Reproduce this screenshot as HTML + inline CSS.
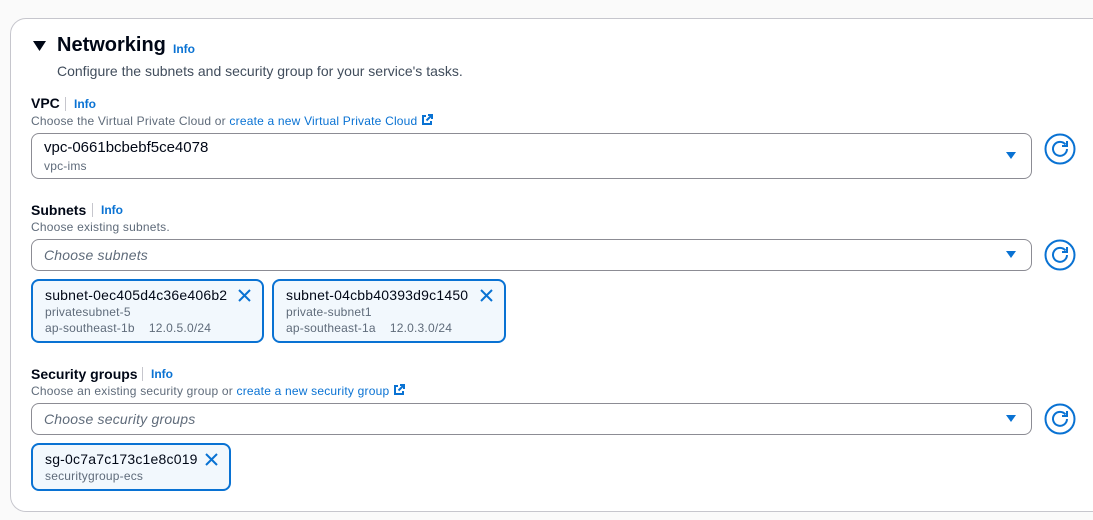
<!DOCTYPE html>
<html><head><style>
*{margin:0;padding:0;box-sizing:border-box}
body{width:1093px;height:520px;background:#fafafa;font-family:"Liberation Sans",Arial,sans-serif;color:#000716;position:relative;overflow:hidden}
.card{position:absolute;left:10px;top:18px;width:1100px;height:494px;background:#fff;border:1px solid #c6c6cd;border-radius:16px}
.a{position:absolute;white-space:nowrap}
.lbl{font-size:14px;font-weight:bold}
.info{font-size:12px;font-weight:bold;color:#0972d3}
.sep{position:absolute;width:1px;height:14px;background:#c6c6cd}
.desc{font-size:12px;color:#5f6b7a;letter-spacing:0.2px}
.lnk{color:#0972d3}
.sel{position:absolute;left:31px;width:1001px;border:1px solid #8c8c94;border-radius:8px;background:#fff}
.ph{font-size:14px;font-style:italic;color:#5f6b7a;letter-spacing:0.2px}
.tri{position:absolute;width:0;height:0;border-left:5px solid transparent;border-right:5px solid transparent;border-top:7px solid #0972d3}
.tok{position:absolute;border:2px solid #0972d3;border-radius:8px;background:#f2f8fd}
.tv{font-size:14px;color:#000716;letter-spacing:0.2px}
.ts{font-size:12px;color:#5f6b7a;letter-spacing:0.2px}
</style></head><body>
<div class="card"></div>
<svg class="a" style="left:33px;top:41px" width="13" height="11"><path d="M0 0H13L6.5 10Z" fill="#000716"/></svg>
<div class="a" style="left:57px;top:34px;font-size:20px;font-weight:bold">Networking</div>
<div class="a info" style="left:173px;top:42px">Info</div>
<div class="a" style="left:57px;top:63px;font-size:14px;color:#414d5c">Configure the subnets and security group for your service's tasks.</div>

<div class="a lbl" style="left:31px;top:95px">VPC</div>
<div class="sep" style="left:65px;top:97px"></div>
<div class="a info" style="left:74px;top:97px">Info</div>
<div class="a desc" style="left:31px;top:114px">Choose the Virtual Private Cloud or <span class="lnk">create a new Virtual Private Cloud</span> <svg width="12" height="12" style="vertical-align:-1px"><path d="M5 2H2v8h8V7M7 1h4v4M11 1L5.5 6.5" stroke="#0972d3" stroke-width="2" fill="none"/></svg></div>
<div class="sel" style="top:133px;height:46px"></div>
<div class="a" style="left:44px;top:139px;font-size:15px">vpc-0661bcbebf5ce4078</div>
<div class="a ts" style="left:44px;top:159px">vpc-ims</div>
<div class="tri" style="left:1006px;top:152px"></div>

<div class="a lbl" style="left:31px;top:202px">Subnets</div>
<div class="sep" style="left:92px;top:203px"></div>
<div class="a info" style="left:101px;top:203px">Info</div>
<div class="a desc" style="left:31px;top:220px">Choose existing subnets.</div>
<div class="sel" style="top:239px;height:32px"></div>
<div class="a ph" style="left:44px;top:247px">Choose subnets</div>
<div class="tri" style="left:1006px;top:251px"></div>

<div class="tok" style="left:31px;top:279px;width:233px;height:64px"></div>
<div class="a tv" style="left:45px;top:287px">subnet-0ec405d4c36e406b2</div>
<div class="a ts" style="left:45px;top:305px">privatesubnet-5</div>
<div class="a ts" style="left:45px;top:321px">ap-southeast-1b&nbsp;&nbsp;&nbsp;&nbsp;12.0.5.0/24</div>
<svg class="a" style="left:238px;top:289px" width="13" height="13"><path d="M1 1L12 12M12 1L1 12" stroke="#0972d3" stroke-width="2"/></svg>
<div class="tok" style="left:272px;top:279px;width:234px;height:64px"></div>
<div class="a tv" style="left:286px;top:287px">subnet-04cbb40393d9c1450</div>
<div class="a ts" style="left:286px;top:305px">private-subnet1</div>
<div class="a ts" style="left:286px;top:321px">ap-southeast-1a&nbsp;&nbsp;&nbsp;&nbsp;12.0.3.0/24</div>
<svg class="a" style="left:480px;top:289px" width="13" height="13"><path d="M1 1L12 12M12 1L1 12" stroke="#0972d3" stroke-width="2"/></svg>

<div class="a lbl" style="left:31px;top:366px">Security groups</div>
<div class="sep" style="left:142px;top:367px"></div>
<div class="a info" style="left:151px;top:367px">Info</div>
<div class="a desc" style="left:31px;top:384px">Choose an existing security group or <span class="lnk">create a new security group</span> <svg width="12" height="12" style="vertical-align:-1px"><path d="M5 2H2v8h8V7M7 1h4v4M11 1L5.5 6.5" stroke="#0972d3" stroke-width="2" fill="none"/></svg></div>
<div class="sel" style="top:403px;height:32px"></div>
<div class="a ph" style="left:44px;top:411px">Choose security groups</div>
<div class="tri" style="left:1006px;top:415px"></div>

<div class="tok" style="left:31px;top:443px;width:200px;height:48px"></div>
<div class="a tv" style="left:45px;top:451px">sg-0c7a7c173c1e8c019</div>
<div class="a ts" style="left:45px;top:469px">securitygroup-ecs</div>
<svg class="a" style="left:205px;top:453px" width="13" height="13"><path d="M1 1L12 12M12 1L1 12" stroke="#0972d3" stroke-width="2"/></svg>

<svg class="a" style="left:1044px;top:133px" width="32" height="32"><circle cx="16" cy="16" r="14.5" fill="none" stroke="#0972d3" stroke-width="2"/><path d="M21.5 11.5A7 7 0 1 0 23 16" fill="none" stroke="#0972d3" stroke-width="2"/><path d="M23 8V13H18" fill="none" stroke="#0972d3" stroke-width="2"/></svg>
<svg class="a" style="left:1044px;top:239px" width="32" height="32"><circle cx="16" cy="16" r="14.5" fill="none" stroke="#0972d3" stroke-width="2"/><path d="M21.5 11.5A7 7 0 1 0 23 16" fill="none" stroke="#0972d3" stroke-width="2"/><path d="M23 8V13H18" fill="none" stroke="#0972d3" stroke-width="2"/></svg>
<svg class="a" style="left:1044px;top:403px" width="32" height="32"><circle cx="16" cy="16" r="14.5" fill="none" stroke="#0972d3" stroke-width="2"/><path d="M21.5 11.5A7 7 0 1 0 23 16" fill="none" stroke="#0972d3" stroke-width="2"/><path d="M23 8V13H18" fill="none" stroke="#0972d3" stroke-width="2"/></svg>
</body></html>
